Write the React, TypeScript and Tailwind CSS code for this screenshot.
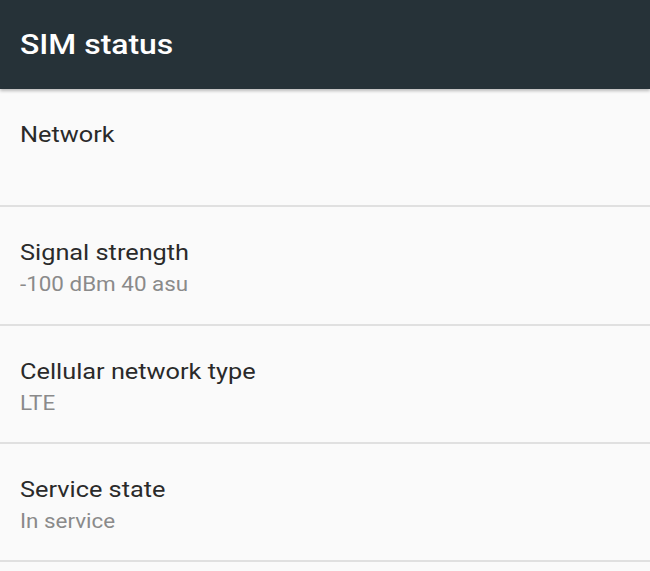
import React from "react";

const rows: { title: string; sub?: string }[] = [
  { title: "Network" },
  { title: "Signal strength", sub: "-100 dBm 40 asu" },
  { title: "Cellular network type", sub: "LTE" },
  { title: "Service state", sub: "In service" },
];

export default function App() {
  return (
    <div
      className="w-[650px] h-[571px] overflow-hidden bg-[#fafafa]"
      style={{ fontFamily: "Roboto, 'Liberation Sans', sans-serif" }}
    >
      <div className="relative z-10 h-[89px] bg-[#263238] flex items-center px-5 shadow-[0_2px_3px_rgba(0,0,0,0.25)]">
        <h1 className="text-white text-[28px] font-medium leading-none pt-[1px] origin-left scale-x-[1.14]">
          SIM status
        </h1>
      </div>
      {rows.map((r) => (
        <div
          key={r.title}
          className="h-[118.3px] border-b-2 border-[#e0e0e0] px-5 pt-[32px]"
        >
          <div className="text-[22px] leading-[28px] text-[#2a2a2a] origin-left scale-x-[1.15]">
            {r.title}
          </div>
          {r.sub && (
            <div className="mt-[3px] text-[20px] leading-[28px] text-[#8a8a8a] origin-left scale-x-[1.12]">
              {r.sub}
            </div>
          )}
        </div>
      ))}
    </div>
  );
}
